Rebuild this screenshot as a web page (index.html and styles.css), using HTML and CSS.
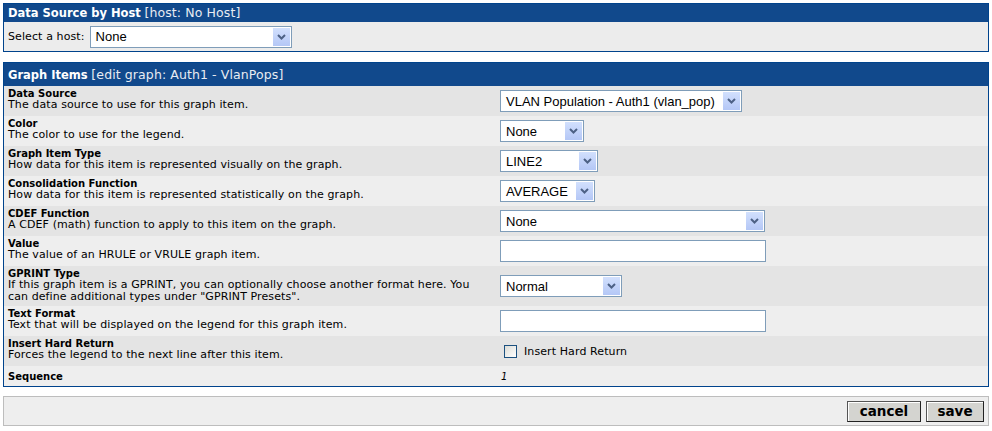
FILE: index.html
```html
<!DOCTYPE html>
<html>
<head>
<meta charset="utf-8">
<link rel="stylesheet" href="styles.css">
</head>
<body>
<div class="page">
  <div class="box">
    <div class="hdr"><b>Data Source by Host</b> <span class="sub">[host: No Host]</span></div>
    <div class="hostrow">
      <span class="lbl">Select a host:</span>
      <div class="sel" style="width:202px"><span class="val">None</span><span class="arr"><svg width="9" height="6" viewBox="0 0 9 6"><path d="M1 1 L4.5 4.5 L8 1" fill="none" stroke="#4d6185" stroke-width="2"/></svg></span></div>
    </div>
  </div>

  <div class="box items">
    <div class="hdr hdr2"><b>Graph Items</b> <span class="sub">[edit graph: Auth1 - VlanPops]</span></div>
    <div class="row a">
      <div class="left"><div class="t">Data Source</div><div class="d">The data source to use for this graph item.</div></div>
      <div class="right"><div class="sel" style="width:242px"><span class="val">VLAN Population - Auth1 (vlan_pop)</span><span class="arr"><svg width="9" height="6" viewBox="0 0 9 6"><path d="M1 1 L4.5 4.5 L8 1" fill="none" stroke="#4d6185" stroke-width="2"/></svg></span></div></div>
    </div>
    <div class="row b">
      <div class="left"><div class="t">Color</div><div class="d">The color to use for the legend.</div></div>
      <div class="right"><div class="sel" style="width:84px"><span class="val">None</span><span class="arr"><svg width="9" height="6" viewBox="0 0 9 6"><path d="M1 1 L4.5 4.5 L8 1" fill="none" stroke="#4d6185" stroke-width="2"/></svg></span></div></div>
    </div>
    <div class="row a">
      <div class="left"><div class="t">Graph Item Type</div><div class="d">How data for this item is represented visually on the graph.</div></div>
      <div class="right"><div class="sel" style="width:98px"><span class="val">LINE2</span><span class="arr"><svg width="9" height="6" viewBox="0 0 9 6"><path d="M1 1 L4.5 4.5 L8 1" fill="none" stroke="#4d6185" stroke-width="2"/></svg></span></div></div>
    </div>
    <div class="row b">
      <div class="left"><div class="t">Consolidation Function</div><div class="d">How data for this item is represented statistically on the graph.</div></div>
      <div class="right"><div class="sel" style="width:95px"><span class="val">AVERAGE</span><span class="arr"><svg width="9" height="6" viewBox="0 0 9 6"><path d="M1 1 L4.5 4.5 L8 1" fill="none" stroke="#4d6185" stroke-width="2"/></svg></span></div></div>
    </div>
    <div class="row a">
      <div class="left"><div class="t">CDEF Function</div><div class="d">A CDEF (math) function to apply to this item on the graph.</div></div>
      <div class="right"><div class="sel" style="width:265px"><span class="val">None</span><span class="arr"><svg width="9" height="6" viewBox="0 0 9 6"><path d="M1 1 L4.5 4.5 L8 1" fill="none" stroke="#4d6185" stroke-width="2"/></svg></span></div></div>
    </div>
    <div class="row b">
      <div class="left"><div class="t">Value</div><div class="d">The value of an HRULE or VRULE graph item.</div></div>
      <div class="right"><div class="inp"></div></div>
    </div>
    <div class="row a tall">
      <div class="left"><div class="t">GPRINT Type</div><div class="d">If this graph item is a GPRINT, you can optionally choose another format here. You<br>can define additional types under "GPRINT Presets".</div></div>
      <div class="right"><div class="sel" style="width:122px"><span class="val">Normal</span><span class="arr"><svg width="9" height="6" viewBox="0 0 9 6"><path d="M1 1 L4.5 4.5 L8 1" fill="none" stroke="#4d6185" stroke-width="2"/></svg></span></div></div>
    </div>
    <div class="row b">
      <div class="left"><div class="t">Text Format</div><div class="d">Text that will be displayed on the legend for this graph item.</div></div>
      <div class="right"><div class="inp"></div></div>
    </div>
    <div class="row a">
      <div class="left"><div class="t">Insert Hard Return</div><div class="d">Forces the legend to the next line after this item.</div></div>
      <div class="right"><span class="chk"></span><span class="chklbl">Insert Hard Return</span></div>
    </div>
    <div class="row b seq">
      <div class="left"><div class="t">Sequence</div></div>
      <div class="right"><i class="num">1</i></div>
    </div>
  </div>

  <div class="box2">
    <span class="btn">cancel</span>
    <span class="btn">save</span>
  </div>
</div>
</body>
</html>
```
FILE: styles.css
```css
html, body { margin: 0; padding: 0; background: #fff; }
body { font-family: "DejaVu Sans", Verdana, sans-serif; font-size: 11px; letter-spacing: 0.1px; color: #000; }
.page { padding: 3px 3px 0 3px; width: 986px; }
.box { border: 1px solid #00438c; background: #efefef; }
.hdr { background: #11498c; color: #fff; font-size: 11.5px; letter-spacing: 0; height: 18px; line-height: 18px; padding-left: 4px; }
.hdr .sub { font-weight: normal; font-size: 12.5px; letter-spacing: 0.1px; color: #e8ecf2; }
.hostrow { height: 29px; display: flex; align-items: center; padding-left: 4px; gap: 5px; background: #ececec; }
.items { margin-top: 10px; }
.hdr2 { height: 23px; line-height: 23px; }
.row { display: flex; height: 30px; align-items: center; }
.row.a { background: #e4e4e4; }
.row.b { background: #eeeeee; }
.row.tall { height: 40px; }
.row.seq { height: 20px; }
.left { width: 492px; padding-left: 4px; padding-bottom: 3px; line-height: 12px; }
.row.tall .left { padding-bottom: 2px; }
.row.seq .left { padding-bottom: 0; }
.t { font-weight: bold; font-size: 10px; letter-spacing: 0; line-height: 11px; }
.d { line-height: 12px; }
.right { display: flex; align-items: center; }
.sel { box-sizing: border-box; height: 22px; border: 1px solid #7f9db9; background: #fff; display: flex; align-items: center; justify-content: space-between; font-family: "Liberation Sans", Arial, sans-serif; font-size: 13px; letter-spacing: 0; padding-left: 5px; padding-right: 1px; }
.arr { width: 17px; height: 18px; background: linear-gradient(#d2e0fd, #b4c7f6); display: flex; align-items: center; justify-content: center; }
.inp { box-sizing: border-box; width: 266px; height: 22px; border: 1px solid #7f9db9; background: #fff; }
.chk { box-sizing: border-box; width: 13px; height: 13px; border: 1px solid #1c5180; background: linear-gradient(135deg, #dcdcd6, #fff); margin-left: 4px; }
.chklbl { margin-left: 7px; }
.num { margin-left: 1px; font-size: 10px; }
.box2 { margin-top: 9px; height: 28px; border: 1px solid #bdbdbd; background: #eeeeee; display: flex; justify-content: flex-end; align-items: center; gap: 5px; padding-right: 4px; }
.btn { box-sizing: border-box; height: 21px; border: 1px solid #555; border-right-color: #222; border-bottom-color: #222; box-shadow: inset 1px 1px 0 #fff; background: #d4d4d0; font-family: "DejaVu Sans", Verdana, sans-serif; font-weight: bold; font-size: 13.5px; letter-spacing: 0; display: flex; align-items: center; justify-content: center; }
.btn:first-child { width: 74px; }
.btn:last-child { width: 58px; }
```
